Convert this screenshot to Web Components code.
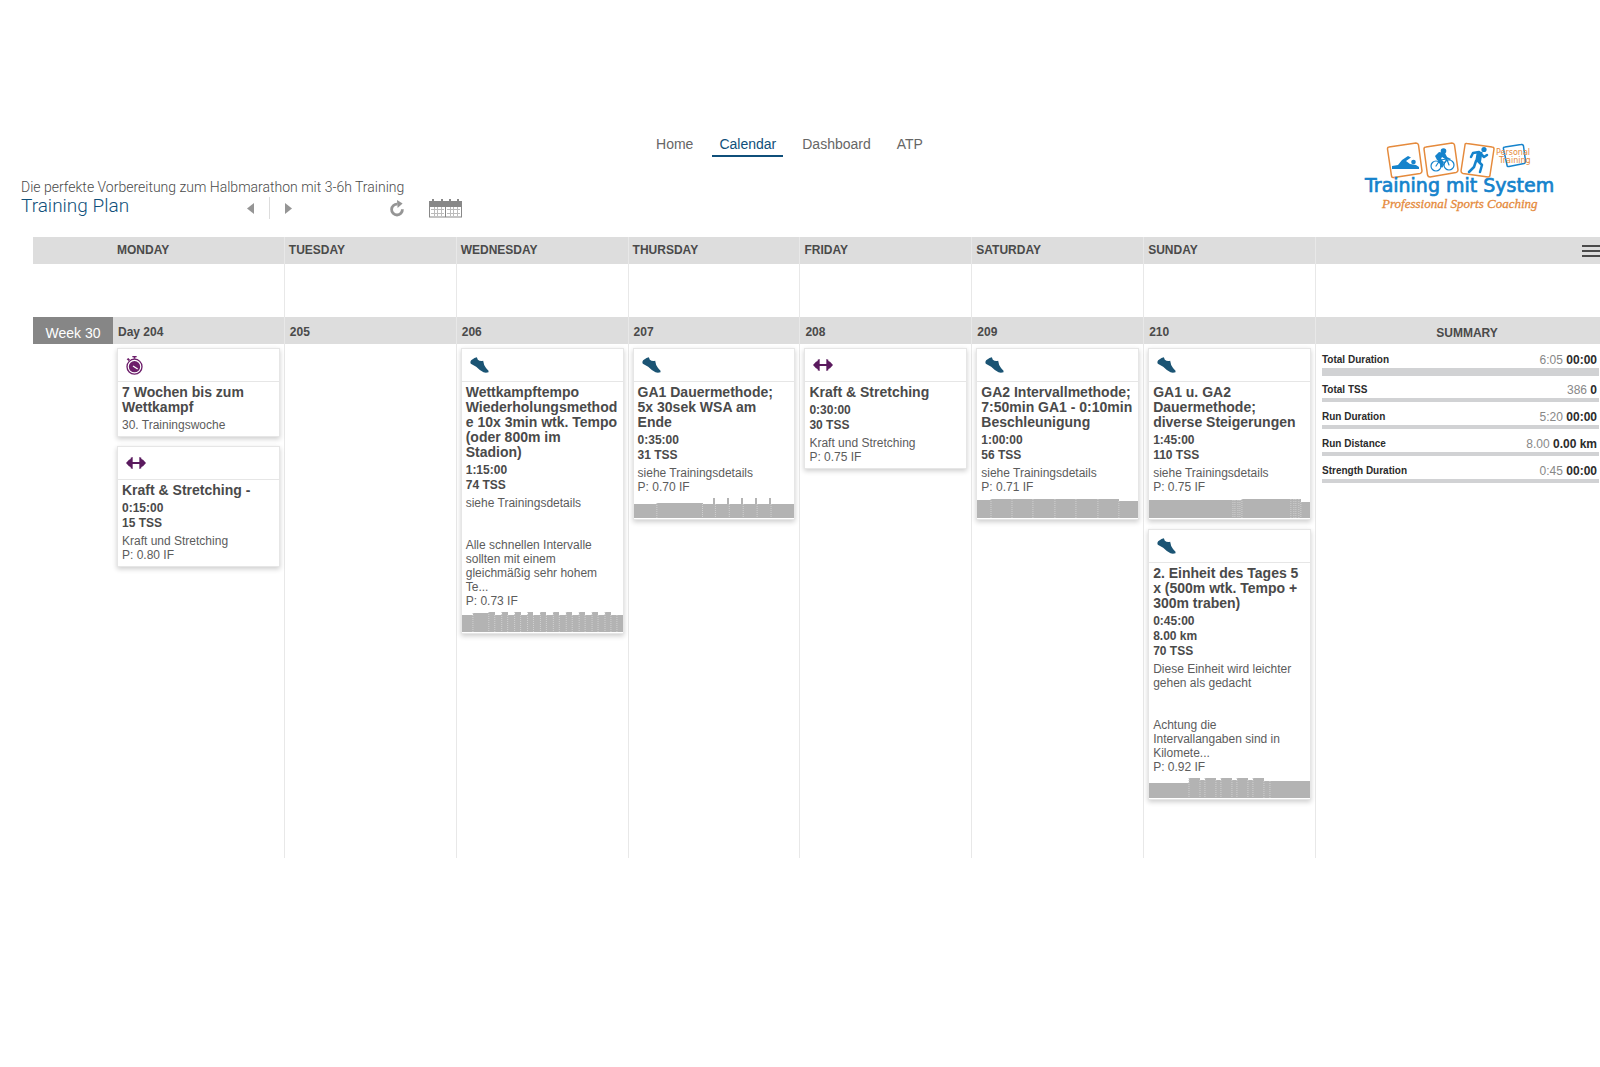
<!DOCTYPE html>
<html lang="de">
<head>
  <meta charset="utf-8">
  <meta name="viewport" content="width=device-width, initial-scale=1">
  <title>Training Plan</title>
  <style>
    body {
      margin: 0;
      padding-top: 134px;
      background: #fff;
      color: #4a4a4a;
      font-family: "Liberation Sans", Arial, sans-serif;
      overflow-x: hidden;
      --light: Roboto, "Liberation Sans", sans-serif;
      --bar: #dddddd;
      --line: #e8e8e8;
      --blue: #0f4f7a;
      --columns: 80px repeat(7, minmax(0, 1fr)) 284px;
    }
  </style>
</head>
<body>
  <tp-header>
    <tp-nav slot="nav" active="Calendar" items="Home,Calendar,Dashboard,ATP"></tp-nav>
    <tp-toolbar slot="plan" heading="Training Plan">Die perfekte Vorbereitung zum Halbmarathon mit 3-6h Training</tp-toolbar>
    <tp-logo slot="logo"></tp-logo>
  </tp-header>

  <tp-calendar>
    <tp-weekdays slot="head" days="MONDAY,TUESDAY,WEDNESDAY,THURSDAY,FRIDAY,SATURDAY,SUNDAY"></tp-weekdays>
    <tp-week label="Week 30">
      <tp-day label="Day 204">
        <tp-workout type="event" heading="7 Wochen bis zum Wettkampf">30. Trainingswoche</tp-workout>
        <tp-workout type="strength" heading="Kraft &amp; Stretching -" stats="0:15:00|15 TSS">Kraft und Stretching
P: 0.80 IF</tp-workout>
      </tp-day>
      <tp-day label="205"></tp-day>
      <tp-day label="206">
        <tp-workout type="run" heading="Wettkampftempo Wiederholungsmethode 10x 3min wtk. Tempo (oder 800m im Stadion)" stats="1:15:00|74 TSS"
          graph="11:17 16:19 6:20 7:17 6:20 7:17 6:20 7:17 6:20 7:17 6:20 7:17 6:20 7:17 6:20 7:17 6:20 7:17 6:20 7:17 6:20 6:17 6:17">siehe Trainingsdetails


Alle schnellen Intervalle sollten mit einem gleichmäßig sehr hohem Te...
P: 0.73 IF</tp-workout>
      </tp-day>
      <tp-day label="207">
        <tp-workout type="run" heading="GA1 Dauermethode; 5x 30sek WSA am Ende" stats="0:35:00|31 TSS"
          graph="23:14 46:15 11:14 2:20 12:14 2:20 12:14 2:20 12:14 2:20 12:14 2:20 24:14">siehe Trainingsdetails
P: 0.70 IF</tp-workout>
      </tp-day>
      <tp-day label="208">
        <tp-workout type="strength" heading="Kraft &amp; Stretching" stats="0:30:00|30 TSS">Kraft und Stretching
P: 0.75 IF</tp-workout>
      </tp-day>
      <tp-day label="209">
        <tp-workout type="run" heading="GA2 Intervallmethode; 7:50min GA1 - 0:10min Beschleunigung" stats="1:00:00|56 TSS"
          graph="14:18 21:19 21:19 22:19 21:19 22:19 21:19 19:17">siehe Trainingsdetails
P: 0.71 IF</tp-workout>
      </tp-day>
      <tp-day label="210">
        <tp-workout type="run" heading="GA1 u. GA2 Dauermethode; diverse Steigerungen" stats="1:45:00|110 TSS"
          graph="84:18 2:18 3:18 2:18 2:18 49:19 3:19 2:19 3:19 2:19 9:16">siehe Trainingsdetails
P: 0.75 IF</tp-workout>
        <tp-workout type="run" heading="2. Einheit des Tages 5 x (500m wtk. Tempo + 300m traben)" stats="0:45:00|8.00 km|70 TSS"
          graph="40:15 11:20 5:18 11:20 5:18 11:20 5:18 11:20 5:18 11:20 6:17 40:17">Diese Einheit wird leichter gehen als gedacht


Achtung die Intervallangaben sind in Kilomete...
P: 0.92 IF</tp-workout>
      </tp-day>
      <tp-summary slot="summary">
        <tp-total class="main" label="Total Duration" planned="6:05" done="00:00"></tp-total>
        <tp-total label="Total TSS" planned="386" done="0"></tp-total>
        <tp-total label="Run Duration" planned="5:20" done="00:00"></tp-total>
        <tp-total label="Run Distance" planned="8.00" done="0.00 km"></tp-total>
        <tp-total label="Strength Duration" planned="0:45" done="00:00"></tp-total>
      </tp-summary>
    </tp-week>
  </tp-calendar>

  <script>
    // Page header: navigation in the middle, plan info on the left, logo on the right
    class TpHeader extends HTMLElement {
      constructor() {
        super();
        this.attachShadow({ mode: "open" });
        this.shadowRoot.innerHTML = `
          <style>
            :host { display: block; }
            header {
              display: grid;
              grid-template-columns: 1fr auto 1fr;
              row-gap: 22px;
              padding: 0 42px 18px 21px;
            }
            .nav { grid-area: 1 / 2; }
            .plan { grid-area: 2 / 1; }
            .logo {
              grid-area: 1 / 3 / 3 / 4;
              place-self: end;
              padding-bottom: 4px;
            }
          </style>
          <header>
            <div class="nav"><slot name="nav"></slot></div>
            <div class="plan"><slot name="plan"></slot></div>
            <div class="logo"><slot name="logo"></slot></div>
          </header>
        `;
      }
    }
    customElements.define("tp-header", TpHeader);

    class TpNav extends HTMLElement {
      constructor() {
        super();
        this.attachShadow({ mode: "open" });
      }

      connectedCallback() {
        const active = this.getAttribute("active");
        const links = this.getAttribute("items").split(",").map((item) =>
          `<a href="#${item.toLowerCase()}" ${item === active ? 'aria-current="page"' : ""}>${item}</a>`
        ).join("");

        this.shadowRoot.innerHTML = `
          <style>
            :host { display: block; }
            nav { display: flex; gap: 12px; }
            a {
              padding: 0 7px 1px;
              border-bottom: 2px solid transparent;
              color: #666;
              font-size: 14px;
              line-height: 20px;
              text-decoration: none;
            }
            a[aria-current] {
              color: var(--blue);
              border-color: var(--blue);
            }
          </style>
          <nav>${links}</nav>
        `;
      }
    }
    customElements.define("tp-nav", TpNav);

    class TpToolbar extends HTMLElement {
      constructor() {
        super();
        this.attachShadow({ mode: "open" });
      }

      connectedCallback() {
        this.shadowRoot.innerHTML = `
          <style>
            :host { display: block; font-family: var(--light); font-weight: 300; }
            p {
              margin: 0;
              font-size: 14px;
              line-height: 16px;
              white-space: nowrap;
            }
            .bar { display: flex; height: 24px; }
            h1 {
              width: 218px;
              margin: 0;
              color: var(--blue);
              font-size: 19px;
              font-weight: 300;
              line-height: 21px;
            }
            .tools { display: flex; align-items: center; padding-top: 2px; }
            button {
              display: flex;
              padding: 0 8px;
              border: 0;
              background: none;
              cursor: pointer;
            }
            .divider { width: 1px; height: 22px; margin: 0 7px; background: #ddd; }
            .refresh { margin-left: 82px; }
            .range { margin-left: 9px; }
          </style>
          <p><slot></slot></p>
          <div class="bar">
            <h1>${this.getAttribute("heading")}</h1>
            <div class="tools">
              <button aria-label="Previous"><svg width="7" height="11"><path d="M7 0V11L0 5.500Z" fill="#959595"/></svg></button>
              <span class="divider"></span>
              <button aria-label="Next"><svg width="7" height="11"><path d="M0 0V11L7 5.500Z" fill="#959595"/></svg></button>
              <button class="refresh" aria-label="Refresh">
                <svg width="14" height="17" viewBox="0 0 14 17">
                  <path d="M7.500 4.200A5.400 5.400 0 1 0 12.400 9.300" fill="none" stroke="#959595" stroke-width="2.800"/>
                  <path d="M7 0L12.600 3.600L7.600 8Z" fill="#959595"/>
                </svg>
              </button>
              <button class="range" aria-label="Date range">
                <svg width="33" height="19" viewBox="0 0 33 19">
                  <path d="M0 2H33V18.500H0Z M1 8V17.500H16V8Z M17 8V17.500H32V8Z" fill="#888" fill-rule="evenodd"/>
                  <path d="M3 0H5V3H3ZM12 0H14V3H12ZM20 0H22V3H20ZM28 0H30V3H28Z" fill="#888"/>
                  <path d="M2 10.500H15M2 14.500H15M5.500 8V17M8.500 8V17M12.500 8V17M18 10.500H31M18 14.500H31M21.500 8V17M24.500 8V17M28.500 8V17" stroke="#bbb"/>
                </svg>
              </button>
            </div>
          </div>
        `;
      }
    }
    customElements.define("tp-toolbar", TpToolbar);

    class TpLogo extends HTMLElement {
      constructor() {
        super();
        this.attachShadow({ mode: "open" });
        this.shadowRoot.innerHTML = `
          <style>
            :host { display: block; }
            svg { display: block; overflow: visible; }
            .frame { fill: none; stroke: #e58a3c; stroke-width: 1.500; stroke-linejoin: round; }
            .figure { fill: #1583cc; }
            .limb { fill: none; stroke: #1583cc; stroke-width: 2.500; stroke-linecap: round; stroke-linejoin: round; }
            .name { font: 19px "DejaVu Sans", sans-serif; fill: #1583cc; stroke: #1583cc; stroke-width: 0.700; }
            .claim { font: italic 13px "Liberation Serif", serif; fill: #e58a3c; stroke: #e58a3c; stroke-width: 0.300; }
            .small { font: 8px "DejaVu Sans", sans-serif; fill: #e58a3c; }
          </style>
          <svg width="197" height="72" viewBox="0 0 197 72" role="img" aria-label="Training mit System">
            <path class="frame" d="M28 4L55 0Q57 0 57.500 2L61 28Q61 30 59 30.500L33 34.500Q31 35 30.500 33L26.500 6Q26.500 4 28 4Z"/>
            <path class="frame" d="M65 4L91 0Q93 0 93.500 2L97 27Q97 29 95 29.500L69 34Q67 34 66.500 32L63 6Q63 4 65 4Z"/>
            <path class="frame" d="M106 0.500L131 4Q133 4 133 6L129 32Q129 34 127 34L102 30.500Q100 30 100 28L104 2Q104 0 106 0.500Z"/>
            <path class="frame" style="stroke:#1583cc" d="M144 4L160 1.500Q162 1 162.500 3L164.500 18Q165 20 163 20.500L148 23.500Q146 24 146 22L142.500 6Q142 4 144 4Z"/>
            <!-- swimmer -->
            <path class="figure" d="M31 23L37 22L41 17L47 13L50 14.500L45 18L49 21L55 22L58 24V26L31 26Z"/>
            <circle class="figure" cx="52.500" cy="19" r="2.300"/>
            <!-- cyclist -->
            <circle cx="75" cy="23" r="5" class="limb" style="stroke-width:1.200"/>
            <circle cx="88" cy="22" r="5" class="limb" style="stroke-width:1.200"/>
            <path class="limb" style="stroke-width:1.200" d="M75 23L79 17L86 16L81 24L79 17M85 14L88 22"/>
            <path class="figure" d="M74 13L78 9L84 10L86 14L90 16L89 17L84 16L81 14L80 16L83 19L81 24L79 24L80 20L76 17Z"/>
            <circle class="figure" cx="82.500" cy="8" r="2.800"/>
            <!-- runner -->
            <circle class="figure" cx="123" cy="6.500" r="2.600"/>
            <path class="figure" d="M116 8L121.500 9L120 19L114 19Z"/>
            <path class="limb" d="M118 9L112 10L110 14M120 11L123 14L126 12M117 18L121 22L119 29M115 18L113 24L108 29"/>
            <text class="small" x="135" y="12">Personal</text>
            <text class="small" x="138" y="20">Training</text>
            <text class="name" x="4" y="49">Training mit System</text>
            <text class="claim" x="21" y="65">Professional Sports Coaching</text>
          </svg>
        `;
      }
    }
    customElements.define("tp-logo", TpLogo);

    class TpCalendar extends HTMLElement {
      constructor() {
        super();
        this.attachShadow({ mode: "open" });
        this.shadowRoot.innerHTML = `
          <style>
            :host { display: block; margin-left: 33px; }
          </style>
          <slot name="head"></slot>
          <slot></slot>
        `;
      }
    }
    customElements.define("tp-calendar", TpCalendar);

    // Weekday names and the empty strip under them
    class TpWeekdays extends HTMLElement {
      constructor() {
        super();
        this.attachShadow({ mode: "open" });
      }

      connectedCallback() {
        const days = this.getAttribute("days").split(",");

        this.shadowRoot.innerHTML = `
          <style>
            :host { display: block; }
            .row { display: grid; grid-template-columns: var(--columns); }
            .names {
              background: var(--bar);
              font-size: 12px;
              font-weight: bold;
              line-height: 26px;
              height: 27px;
            }
            .strip { height: 53px; }
            .day { padding-left: 4px; border-right: 1px solid var(--line); }
            .menu {
              display: flex;
              align-items: center;
              justify-content: flex-end;
            }
            button { display: flex; padding: 0; border: 0; background: none; }
          </style>
          <div class="row names">
            <span></span>
            ${days.map((day) => `<span class="day">${day}</span>`).join("")}
            <span class="menu">
              <button aria-label="Menu">
                <svg width="18" height="12"><path d="M0 1H18M0 6H18M0 11H18" stroke="#4a4a4a" stroke-width="2"/></svg>
              </button>
            </span>
          </div>
          <div class="row strip">
            <span></span>
            ${days.map(() => `<span class="day"></span>`).join("")}
          </div>
        `;
      }
    }
    customElements.define("tp-weekdays", TpWeekdays);

    class TpWeek extends HTMLElement {
      constructor() {
        super();
        this.attachShadow({ mode: "open" });
      }

      connectedCallback() {
        this.shadowRoot.innerHTML = `
          <style>
            :host {
              display: grid;
              grid-template-columns: var(--columns);
              min-height: 541px;
            }
            .label {
              height: 27px;
              background: #868686;
              color: #fff;
              font-size: 14px;
              line-height: 32px;
              text-align: center;
            }
          </style>
          <div class="label">${this.getAttribute("label")}</div>
          <slot></slot>
          <slot name="summary"></slot>
        `;
      }
    }
    customElements.define("tp-week", TpWeek);

    class TpDay extends HTMLElement {
      constructor() {
        super();
        this.attachShadow({ mode: "open" });
      }

      connectedCallback() {
        this.shadowRoot.innerHTML = `
          <style>
            :host { display: block; border-right: 1px solid var(--line); }
            .label {
              height: 27px;
              padding-left: 5px;
              background: var(--bar);
              font-size: 12px;
              font-weight: bold;
              line-height: 30px;
            }
            .list {
              display: flex;
              flex-direction: column;
              gap: 9px;
              padding: 4px;
            }
          </style>
          <div class="label">${this.getAttribute("label")}</div>
          <div class="list"><slot></slot></div>
        `;
      }
    }
    customElements.define("tp-day", TpDay);

    const ICONS = {
      run: `<svg width="19" height="16" viewBox="0 0 56 48"><path fill="#1b5474" d="M13 3L20 1L23 8Q30 14 39 11L42 24Q45 31 55 41V46Q47 48 40 46L29 39L18 29L2 20Q-1 15 3 10Z"/></svg>`,
      strength: `<svg width="20" height="12" viewBox="0 0 60 36"><path fill="#5a1a5e" d="M0 18L9 8L14 6V2L20 0V15H40V0L46 2V6L51 8L60 18L51 28L46 30V34L40 36V21H20V36L14 34V30L9 28Z"/></svg>`,
      event: `<svg width="17" height="19" viewBox="0 0 51 57">
        <path fill="#6d1f6b" d="M19 0H32V4H28V8H23V4H19ZM2 10L7 6L12 11L8 15Z"/>
        <circle cx="25.500" cy="32" r="22.500" fill="none" stroke="#6d1f6b" stroke-width="4"/>
        <circle cx="25.500" cy="32" r="17" fill="#6d1f6b"/>
        <path stroke="#fff" stroke-width="4" d="M21 30L35 39"/></svg>`
    };

    class TpWorkout extends HTMLElement {
      constructor() {
        super();
        this.attachShadow({ mode: "open" });
      }

      connectedCallback() {
        const type = this.getAttribute("type");
        const heading = this.getAttribute("heading").replace("&", "&amp;");
        const stats = this.getAttribute("stats");
        const graph = this.getAttribute("graph");

        this.shadowRoot.innerHTML = `
          <style>
            :host {
              display: block;
              border: 1px solid #e6e6e6;
              background: #fff;
              box-shadow: 0 2px 5px rgba(0, 0, 0, 0.2);
            }
            .head {
              display: flex;
              align-items: center;
              height: 32px;
              padding-left: 8px;
              border-bottom: 1px solid #e6e6e6;
            }
            .body { padding: 3px 3px 4px 4px; overflow-wrap: anywhere; }
            h3 { margin: 0; font-size: 14px; line-height: 15px; }
            .stats {
              margin-top: 3px;
              font-size: 12px;
              font-weight: bold;
              line-height: 15px;
            }
            .text {
              margin: 3px 0 0;
              padding-right: 8px;
              color: #5c5c5c;
              font-size: 12px;
              line-height: 14px;
              white-space: pre-line;
            }
            .graph { padding-bottom: 1px; }
          </style>
          <div class="head">${ICONS[type]}</div>
          <div class="body">
            <h3>${heading}</h3>
            ${stats ? `<div class="stats">${stats.split("|").map((s) => `<div>${s}</div>`).join("")}</div>` : ""}
            <p class="text"><slot></slot></p>
          </div>
          ${graph ? `<tp-graph class="graph" data="${graph}"></tp-graph>` : ""}
        `;
      }
    }
    customElements.define("tp-workout", TpWorkout);

    // Intensity graph, data is a list of "width:height" steps
    class TpGraph extends HTMLElement {
      constructor() {
        super();
        this.attachShadow({ mode: "open" });
      }

      connectedCallback() {
        let x = 0;
        let bars = "";
        let marks = "";
        this.getAttribute("data").split(" ").forEach((step) => {
          const [width, height] = step.split(":").map(Number);
          bars += `<rect x="${x}" y="${20 - height}" width="${width}" height="${height}"/>`;
          // narrow peaks get no divider of their own
          if (x > 0 && !(width < 3 && height === 20)) {
            marks += `<line x1="${x}" x2="${x}" y1="${20 - height}" y2="20"/>`;
          }
          x += width;
        });

        this.shadowRoot.innerHTML = `
          <style>
            :host { display: block; }
            svg { display: block; width: 100%; height: 20px; }
            rect { fill: #b3b3b3; shape-rendering: crispEdges; }
            line { stroke: #d0d0d0; stroke-dasharray: 1 1; vector-effect: non-scaling-stroke; }
          </style>
          <svg viewBox="0 0 ${x} 20" preserveAspectRatio="none" aria-hidden="true">${bars}${marks}</svg>
        `;
      }
    }
    customElements.define("tp-graph", TpGraph);

    class TpSummary extends HTMLElement {
      constructor() {
        super();
        this.attachShadow({ mode: "open" });
        this.shadowRoot.innerHTML = `
          <style>
            :host { display: block; }
            h2 {
              height: 27px;
              margin: 0;
              padding-left: 18px;
              background: var(--bar);
              font-size: 12px;
              line-height: 32px;
              text-align: center;
            }
            .list { padding: 8px 1px 0 6px; }
          </style>
          <h2>SUMMARY</h2>
          <div class="list"><slot></slot></div>
        `;
      }
    }
    customElements.define("tp-summary", TpSummary);

    class TpTotal extends HTMLElement {
      constructor() {
        super();
        this.attachShadow({ mode: "open" });
      }

      connectedCallback() {
        this.shadowRoot.innerHTML = `
          <style>
            :host { display: block; padding-bottom: 7px; color: #2b2b2b; }
            :host(.main) { padding-bottom: 6px; }
            .line {
              display: flex;
              justify-content: space-between;
              padding-right: 2px;
              font-size: 12px;
              font-weight: bold;
              line-height: 16px;
            }
            .label { font-size: 10px; }
            .planned { color: #888; font-weight: normal; }
            .track { height: 4px; background: #d1d2d4; }
            :host(.main) .track { height: 8px; }
          </style>
          <div class="line">
            <span class="label">${this.getAttribute("label")}</span>
            <span><span class="planned">${this.getAttribute("planned")}</span> ${this.getAttribute("done")}</span>
          </div>
          <div class="track"></div>
        `;
      }
    }
    customElements.define("tp-total", TpTotal);
  </script>
</body>
</html>
